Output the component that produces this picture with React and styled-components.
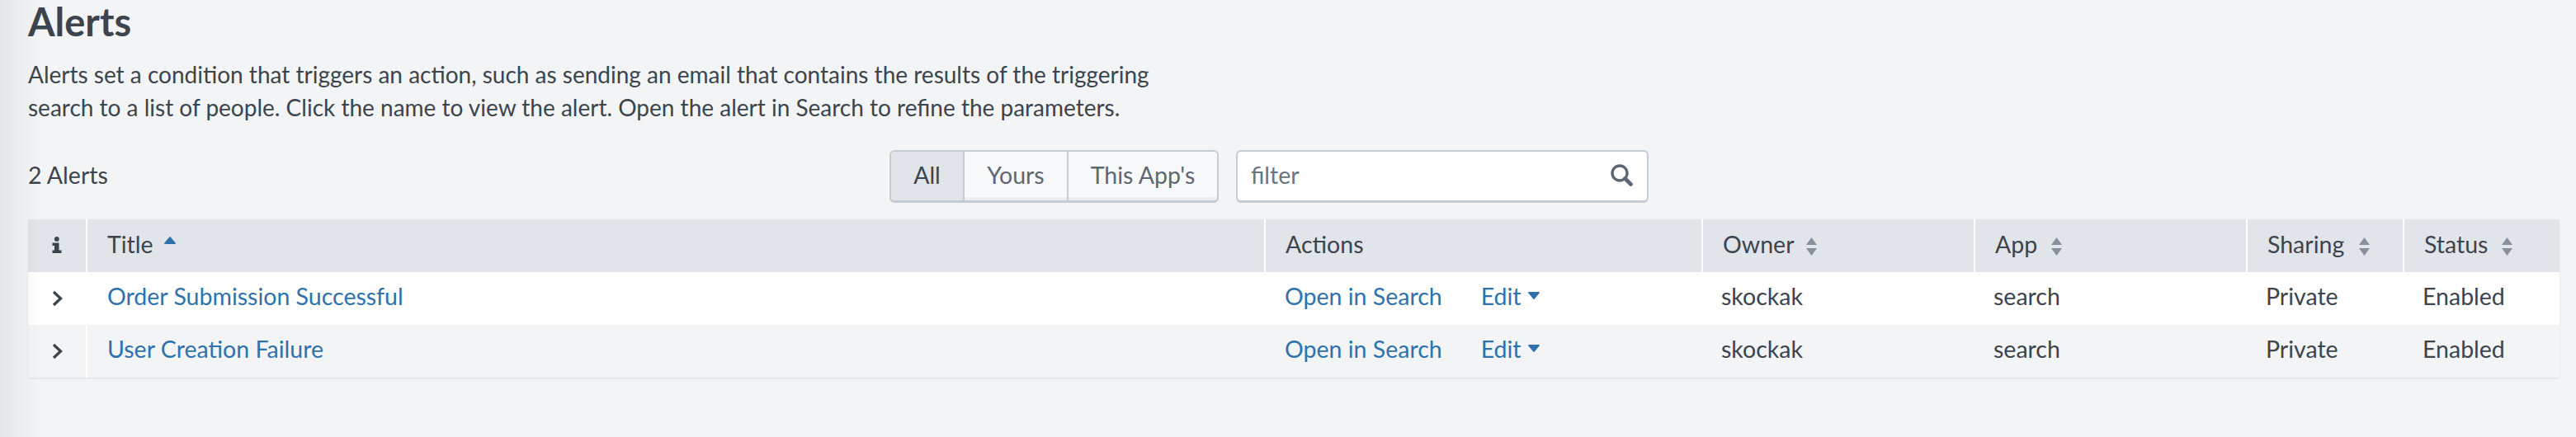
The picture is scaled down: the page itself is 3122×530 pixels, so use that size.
import React from "react";
import styled, { createGlobalStyle } from "styled-components";

const GlobalStyle = createGlobalStyle`
    html, body {
        margin: 0;
        padding: 0;
        background: #f2f4f6;
    }
`;

const Page = styled.div`
    position: relative;
    height: 530px;
    overflow: hidden;
    padding: 0 20px 0 34px;
    box-sizing: border-box;
    background: #f2f4f6;
    color: #3c444d;
    font-family: Lato, "Liberation Sans", sans-serif;
    font-size: 28.5px;
`;

const EdgeShade = styled.div`
    position: absolute;
    left: 0;
    top: 0;
    bottom: 0;
    width: 50px;
    pointer-events: none;
    background: linear-gradient(to right, rgba(0, 0, 0, 0.06), rgba(0, 0, 0, 0));
`;

const Title = styled.h1`
    margin: 0;
    padding-top: 1px;
    height: 49px;
    line-height: 50px;
    font-size: 47px;
    font-weight: 700;
    color: #3c444d;
`;

const Description = styled.p`
    margin: 20px 0 0;
    width: 1400px;
    line-height: 40px;
    font-size: 28px;
`;

const Toolbar = styled.div`
    display: flex;
    align-items: center;
    margin-top: 32px;
    height: 64px;
`;

const Count = styled.div`
    width: 1044px;
    padding-bottom: 4px;
`;

const ButtonGroup = styled.div`
    display: flex;
    height: 64px;
    box-sizing: border-box;
    border: 2px solid #c3cbd4;
    border-bottom-width: 3px;
    border-radius: 6px;
    overflow: hidden;
    background: #f7f8fa;
    box-shadow: inset 0 -4px 0 #eceef1;
`;

const GroupButton = styled.button`
    width: ${({ width }) => width}px;
    padding: 0 0 4px;
    border: none;
    border-left: ${({ first }) => (first ? "none" : "2px solid #c3cbd4")};
    background: ${({ active }) => (active ? "#e1e4e9" : "transparent")};
    color: ${({ active }) => (active ? "#3c444d" : "#5c6773")};
    font-family: inherit;
    font-size: 28.5px;
`;

const FilterBox = styled.div`
    display: flex;
    align-items: center;
    justify-content: space-between;
    width: 500px;
    height: 64px;
    margin-left: 21px;
    padding: 0 17px 4px 16px;
    box-sizing: border-box;
    border: 2px solid #c3cbd4;
    border-bottom-width: 3px;
    border-radius: 6px;
    background: #ffffff;
    color: #6b7580;
`;

const Table = styled.table`
    width: 3068px;
    margin-top: 20px;
    border-collapse: separate;
    border-spacing: 0;
    table-layout: fixed;
    box-shadow: 0 1px 2px rgba(0, 0, 0, 0.1);
`;

const HeadCell = styled.th`
    height: 64px;
    padding: 0 0 5px ${({ pad }) => pad}px;
    box-sizing: border-box;
    border-right: 2px solid #ffffff;
    background: #e1e4e9;
    color: #3c444d;
    font-size: 28.5px;
    font-weight: 400;
    text-align: left;
    white-space: nowrap;
    &:last-child {
        border-right: none;
    }
`;

const Row = styled.tr`
    background: ${({ odd }) => (odd ? "#ffffff" : "#f2f4f6")};
`;

const Cell = styled.td`
    height: 64px;
    padding: 0 0 7px ${({ pad }) => pad}px;
    box-sizing: border-box;
    white-space: nowrap;
`;

const ExpandCell = styled(Cell)`
    padding: 0;
    border-right: 2px solid #ffffff;
    svg {
        display: block;
        margin: 0 auto;
    }
`;

const CenterHead = styled(HeadCell)`
    padding: 0 0 2px;
    svg {
        display: block;
        margin: 0 auto;
    }
`;

const RowLink = styled.a`
    color: #2f72ab;
    text-decoration: none;
`;

const EditLink = styled(RowLink)`
    display: inline-flex;
    align-items: center;
    gap: 8px;
    margin-left: 47px;
`;

const SortIcon = styled.svg`
    margin-left: ${({ gap }) => gap}px;
    vertical-align: ${({ lift }) => lift}px;
`;

const InfoIcon = () => (
    <svg width="12" height="20" viewBox="0 0 12 20" fill="#3c444d">
        <circle cx="5.8" cy="2.9" r="2.9" />
        <path d="M.5 7.5H8.5V16.5H11.5V20H.5V16.5H3V11H.5z" />
    </svg>
);

const Chevron = () => (
    <svg width="13" height="20" viewBox="0 0 13 20" fill="none" stroke="#3c444d" strokeWidth="3.3">
        <path d="M2 2l8.5 8L2 18" />
    </svg>
);

const Caret = () => (
    <svg width="14" height="9" viewBox="0 0 14 9" fill="#2f72ab">
        <path d="M1 0h12c1 0 1.2.8.6 1.4L7.8 8.4c-.4.5-1.2.5-1.6 0L.4 1.4C-.2.8 0 0 1 0z" />
    </svg>
);

const SortAsc = () => (
    <SortIcon gap={13} lift={11} width="14" height="9" viewBox="0 0 14 9" fill="#2f72ab">
        <path d="M1 9h12c1 0 1.2-.8.6-1.4L7.8.6c-.4-.5-1.2-.5-1.6 0L.4 7.6C-.2 8.2 0 9 1 9z" />
    </SortIcon>
);

const SortBoth = ({ gap }) => (
    <SortIcon gap={gap} lift={-3} width="15" height="22" viewBox="0 0 15 22" fill="#87919c">
        <path d="M7.5 0l6.5 9H1zM1 13h13l-6.5 9z" />
    </SortIcon>
);

const SearchIcon = () => (
    <svg width="28" height="28" viewBox="0 0 28 28" fill="none" stroke="#5c6773">
        <circle cx="12" cy="12" r="9" strokeWidth="3.4" />
        <path d="M18.5 18.5l7 7" strokeWidth="4.6" strokeLinecap="round" />
    </svg>
);

const alerts = [
    { name: "Order Submission Successful", odd: true },
    { name: "User Creation Failure", odd: false },
];

const columns = [72, 1428, 530, 330, 330, 190, 188];

export default function App() {
    return (
        <Page>
            <GlobalStyle />
            <Title>Alerts</Title>
            <Description>
                Alerts set a condition that triggers an action, such as sending an email that contains the results of the triggering
                search to a list of people. Click the name to view the alert. Open the alert in Search to refine the parameters.
            </Description>
            <Toolbar>
                <Count>2 Alerts</Count>
                <ButtonGroup>
                    <GroupButton first active width={87}>All</GroupButton>
                    <GroupButton width={126}>Yours</GroupButton>
                    <GroupButton width={182}>This App's</GroupButton>
                </ButtonGroup>
                <FilterBox>
                    filter
                    <SearchIcon />
                </FilterBox>
            </Toolbar>
            <Table>
                <colgroup>
                    {columns.map((width, i) => <col key={i} width={width} />)}
                </colgroup>
                <thead>
                    <tr>
                        <CenterHead><InfoIcon /></CenterHead>
                        <HeadCell pad={24}>Title<SortAsc /></HeadCell>
                        <HeadCell pad={24}>Actions</HeadCell>
                        <HeadCell pad={24}>Owner<SortBoth gap={13} /></HeadCell>
                        <HeadCell pad={24}>App<SortBoth gap={16} /></HeadCell>
                        <HeadCell pad={24}>Sharing<SortBoth gap={17} /></HeadCell>
                        <HeadCell pad={24}>Status<SortBoth gap={16} /></HeadCell>
                    </tr>
                </thead>
                <tbody>
                    {alerts.map((alert) => (
                        <Row key={alert.name} odd={alert.odd}>
                            <ExpandCell><Chevron /></ExpandCell>
                            <Cell pad={24}><RowLink>{alert.name}</RowLink></Cell>
                            <Cell pad={23}>
                                <RowLink>Open in Search</RowLink>
                                <EditLink>Edit<Caret /></EditLink>
                            </Cell>
                            <Cell pad={22}>skockak</Cell>
                            <Cell pad={22}>search</Cell>
                            <Cell pad={22}>Private</Cell>
                            <Cell pad={22}>Enabled</Cell>
                        </Row>
                    ))}
                </tbody>
            </Table>
            <EdgeShade />
        </Page>
    );
}
